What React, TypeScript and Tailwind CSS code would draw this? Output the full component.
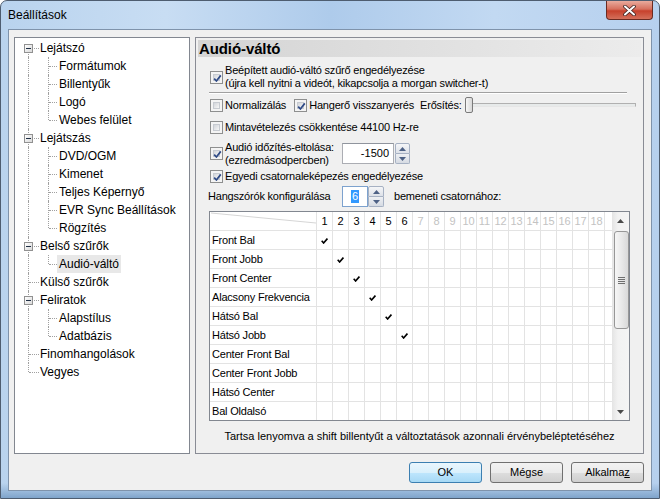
import React from "react";

const UI = "font-['Liberation_Sans',Arial,sans-serif] text-[11px] tracking-[-0.2px] text-black";

function CheckBox({ checked }: { checked?: boolean }) {
  return (
    <span className="relative flex h-[13px] w-[13px] shrink-0 border border-[#8e8f8f] bg-[#f4f4f4] p-[2px]">
      <span className="block h-full w-full border border-[#c7cbd1] bg-gradient-to-br from-[#d2d5da] to-[#f7f7f7]" />
      {checked && (
        <svg className="absolute left-[1px] top-[1px]" width="11" height="11" viewBox="0 0 11 11">
          <path d="M2.2 5.6 L4.4 8 L8.8 2.4" fill="none" stroke="#2e4a86" strokeWidth="1.7" strokeLinejoin="round" />
        </svg>
      )}
    </span>
  );
}

function Arrow({ up, color = "#4d6185" }: { up?: boolean; color?: string }) {
  return (
    <svg width="7" height="4" viewBox="0 0 7 4">
      {up ? <path d="M0 4 L3.5 0 L7 4Z" fill={color} /> : <path d="M0 0 L3.5 4 L7 0Z" fill={color} />}
    </svg>
  );
}

function SpinButtons({ w }: { w: string }) {
  return (
    <div className={`flex ${w} flex-col`}>
      <div className="flex flex-1 items-center justify-center rounded-t-[2px] border border-[#a6b1c3] bg-gradient-to-b from-[#f5f6f8] to-[#dde1e8]">
        <Arrow up />
      </div>
      <div className="flex flex-1 items-center justify-center rounded-b-[2px] border border-t-0 border-[#a6b1c3] bg-gradient-to-b from-[#eef0f3] to-[#d6dbe3]">
        <Arrow />
      </div>
    </div>
  );
}

type TreeRow = { label: string; level: 0 | 1; box?: boolean; first?: boolean; last?: boolean; sel?: boolean };

const tree: TreeRow[] = [
  { label: "Lejátszó", level: 0, box: true, first: true },
  { label: "Formátumok", level: 1 },
  { label: "Billentyűk", level: 1 },
  { label: "Logó", level: 1 },
  { label: "Webes felület", level: 1, last: true },
  { label: "Lejátszás", level: 0, box: true },
  { label: "DVD/OGM", level: 1 },
  { label: "Kimenet", level: 1 },
  { label: "Teljes Képernyő", level: 1 },
  { label: "EVR Sync Beállítások", level: 1 },
  { label: "Rögzítés", level: 1, last: true },
  { label: "Belső szűrők", level: 0, box: true },
  { label: "Audió-váltó", level: 1, last: true, sel: true },
  { label: "Külső szűrők", level: 0 },
  { label: "Feliratok", level: 0, box: true },
  { label: "Alapstílus", level: 1 },
  { label: "Adatbázis", level: 1, last: true },
  { label: "Finomhangolások", level: 0 },
  { label: "Vegyes", level: 0, last: true },
];

const DOT = "border-dotted border-[#a0a0a0]";

function TreeItem({ r }: { r: TreeRow }) {
  return (
    <div className="relative h-[18px]">
      {r.level === 0 ? (
        <div
          className={`absolute left-[13px] border-l ${DOT} ${
            r.first ? "top-[9px] bottom-0" : r.last ? "top-0 h-[9px]" : "top-0 bottom-0"
          }`}
        />
      ) : (
        <div className={`absolute left-[13px] top-0 bottom-0 border-l ${DOT}`} />
      )}
      {r.level === 0 ? (
        <div className={`absolute left-[14px] top-[9px] w-[10px] border-t ${DOT}`} />
      ) : (
        <>
          <div className={`absolute left-[33px] top-0 border-l ${DOT} ${r.last ? "h-[9px]" : "bottom-0"}`} />
          <div className={`absolute left-[34px] top-[9px] w-[8px] border-t ${DOT}`} />
        </>
      )}
      {r.box && (
        <div className="absolute left-[9px] top-[5px] flex h-[9px] w-[9px] items-center justify-center border border-[#919191] bg-gradient-to-br from-white to-[#d9d9d9]">
          <div className="h-px w-[5px] bg-[#1f2f45]" />
        </div>
      )}
      <span
        className={`absolute top-0 h-[18px] px-[2px] leading-[18px] ${r.level === 0 ? "left-[23px]" : "left-[42px]"} ${
          r.sel ? "bg-[#e8e8e8]" : ""
        }`}
      >
        {r.label}
      </span>
    </div>
  );
}

const channels = ["Front Bal", "Front Jobb", "Front Center", "Alacsony Frekvencia", "Hátsó Bal", "Hátsó Jobb", "Center Front Bal", "Center Front Jobb", "Hátsó Center", "Bal Oldalsó"];
const cols = Array.from({ length: 18 }, (_, i) => i + 1);

function Tick() {
  return (
    <svg width="7" height="6" viewBox="0 0 7 6" className="mt-[2px]">
      <path d="M0.7 2.8 L2.6 5 L6.4 0.6" fill="none" stroke="#000" strokeWidth="1.6" />
    </svg>
  );
}

function Grid() {
  return (
    <div className="ml-[13px] mt-[4px] flex h-[210px] w-[421px] overflow-hidden border border-[#828790] bg-white">
      <div className="grid flex-1 auto-rows-[19px] grid-cols-[107px_repeat(18,16px)_7px] content-start overflow-hidden">
        <div className="relative border-b border-r border-[#e3e3e3]">
          <svg className="absolute left-0 top-0" width="106" height="18">
            <line x1="1" y1="1" x2="106" y2="11" stroke="#d6d6d6" strokeWidth="1" />
          </svg>
        </div>
        {cols.map((c) => (
          <div
            key={c}
            className={`flex items-center justify-center border-b border-r border-[#e3e3e3] tracking-normal ${c <= 6 ? "text-black" : "text-[#c3c3c3]"}`}
          >
            {c}
          </div>
        ))}
        <div className="border-b border-[#e3e3e3]" />
        {channels.map((ch, ri) => (
          <React.Fragment key={ch}>
            <div className="flex items-center border-b border-r border-[#e3e3e3] pl-[2px]">{ch}</div>
            {cols.map((c) => (
              <div key={c} className="flex items-center justify-center border-b border-r border-[#e3e3e3]">
                {c === ri + 1 && ri < 6 ? <Tick /> : null}
              </div>
            ))}
            <div className="border-b border-[#e3e3e3]" />
          </React.Fragment>
        ))}
      </div>
      <div className="flex w-[17px] shrink-0 flex-col bg-[linear-gradient(90deg,#e4e4e4,#f2f2f2_35%,#f4f4f4)]">
        <div className="flex h-[17px] items-center justify-center">
          <Arrow up color="#4a4a4a" />
        </div>
        <div className="ml-[2px] mt-[2px] flex h-[98px] flex-col items-center justify-center gap-[1px] rounded-[3px] border border-[#979797] bg-[linear-gradient(90deg,#f6f6f6,#e9e9e9_50%,#d9d9d9)]">
          <div className="h-px w-[7px] bg-[#6f6f6f]" />
          <div className="h-px w-[7px] bg-[#6f6f6f]" />
          <div className="h-px w-[7px] bg-[#6f6f6f]" />
          <div className="h-px w-[7px] bg-[#6f6f6f]" />
        </div>
        <div className="flex-1" />
        <div className="flex h-[17px] items-center justify-center">
          <Arrow color="#4a4a4a" />
        </div>
      </div>
    </div>
  );
}

function Button({ children, def }: { children: React.ReactNode; def?: boolean }) {
  return (
    <div
      className={`flex h-[21px] w-[73px] items-center justify-center rounded-[3px] border ${
        def
          ? "border-[#3c7fb1] bg-[linear-gradient(180deg,#eaf6fd_0%,#d9f0fc_50%,#bee6fd_51%,#a7d9f5_100%)]"
          : "border-[#707070] bg-[linear-gradient(180deg,#f2f2f2_0%,#ebebeb_50%,#dddddd_51%,#cfcfcf_100%)]"
      }`}
    >
      {children}
    </div>
  );
}

export default function App() {
  return (
    <div className="h-[499px] w-[660px] overflow-hidden bg-white">
      <div className="flex h-[499px] w-[660px] flex-col rounded-t-[7px] border border-[#4e5d70] bg-[linear-gradient(180deg,rgba(255,255,255,0)_97%,#7fa4cb_100%),linear-gradient(90deg,#b9d3ee_0%,#c8ddf3_25%,#aecbeb_50%,#c2d9f2_75%,#b6d0ee_100%)]">
        <div className="flex h-[28px] shrink-0 items-start justify-between">
          <span className="ml-[7px] mt-[7px] font-['Liberation_Sans',Arial,sans-serif] text-[12px] leading-[15px] text-black">
            Beállítások
          </span>
          <div className="mr-[6px] flex h-[19px] w-[47px] items-center justify-center rounded-b-[4px] border border-t-0 border-[#6a2b22] bg-[linear-gradient(180deg,#e9ab9d_0%,#d6705e_45%,#c7412c_55%,#d4705b_100%)]">
            <svg width="13" height="11" viewBox="0 0 13 11">
              <path d="M2 1.5 L11 9.5 M11 1.5 L2 9.5" stroke="#3b2320" strokeWidth="3.6" strokeLinecap="round" />
              <path d="M2 1.5 L11 9.5 M11 1.5 L2 9.5" stroke="#ffffff" strokeWidth="2" strokeLinecap="round" />
            </svg>
          </div>
        </div>
        <div className={`mx-[7px] mb-[7px] flex flex-1 flex-col border border-[#7f93ab] bg-[#f0f0f0] pl-[5px] pr-[7px] pt-[7px] ${UI}`}>
          <div className="flex h-[417px] gap-[5px]">
            <div className="w-[176px] shrink-0 border border-[#828790] bg-white pt-px font-['Liberation_Sans',Arial,sans-serif] text-[12px] tracking-normal">
              {tree.map((r) => (
                <TreeItem key={r.label} r={r} />
              ))}
            </div>
            <div className="flex flex-1 flex-col border border-[#898c95] bg-[#f0f0f0]">
              <div className="mx-[2px] mt-[2px] h-[17px] bg-gradient-to-r from-[#d4d4d4] to-[#ececec] pl-[1px] text-[15px] font-bold leading-[17px] tracking-[-0.1px]">
                Audió-váltó
              </div>
              <div className="ml-[14px] mt-[7px] flex h-[26px] items-center gap-[2px]">
                <CheckBox checked />
                <div className="leading-[13px]">
                  <div>Beépített audió-váltó szűrő engedélyezése</div>
                  <div>(újra kell nyitni a videót, kikapcsolja a morgan switcher-t)</div>
                </div>
              </div>
              <div className="ml-[13px] mt-[2px] h-[2px] w-[418px] border-b border-t border-b-white border-t-[#a0a0a0]" />
              <div className="ml-[14px] mt-[3px] flex h-[16px] items-center">
                <CheckBox />
                <span className="ml-[2px] leading-[13px]">Normalizálás</span>
                <span className="ml-[8px]">
                  <CheckBox checked />
                </span>
                <span className="ml-[2px] leading-[13px]">Hangerő visszanyerés</span>
                <span className="ml-[6px] leading-[13px]">Erősítés:</span>
                <div className="relative ml-[3px] flex h-[16px] w-[171px] items-center">
                  <div className="h-[4px] w-full border border-[#b0b0b0] border-b-[#e6e6e6] bg-[#e7eaea]" />
                  <div className="absolute left-0 top-0 h-[16px] w-[8px] rounded-[2px] border border-[#7a7a7a] bg-gradient-to-r from-[#f7f7f7] to-[#d7d7d7]" />
                </div>
              </div>
              <div className="ml-[14px] mt-[6px] flex h-[16px] items-center gap-[2px]">
                <CheckBox />
                <span className="leading-[13px]">Mintavételezés csökkentése 44100 Hz-re</span>
              </div>
              <div className="ml-[14px] mt-[8px] flex h-[21px] items-center">
                <CheckBox checked />
                <div className="ml-[2px] w-[117px] leading-[13px]">
                  <div>Audió időzítés-eltolása:</div>
                  <div>(ezredmásodpercben)</div>
                </div>
                <div className="flex h-[21px] w-[52px] items-center justify-end border border-[#abadb3] border-t-[#8f949d] bg-white pr-[4px] tracking-normal">
                  -1500
                </div>
                <div className="ml-px flex h-[21px]">
                  <SpinButtons w="w-[15px]" />
                </div>
              </div>
              <div className="ml-[14px] mt-[4px] flex h-[16px] items-center gap-[2px]">
                <CheckBox checked />
                <span className="leading-[13px]">Egyedi csatornaleképezés engedélyezése</span>
              </div>
              <div className="ml-[12px] mt-[2px] flex h-[21px] items-center">
                <span className="w-[134px] leading-[13px]">Hangszórók konfigurálása</span>
                <div className="flex h-[21px] w-[26px] items-center border border-[#7da2ce] bg-white pl-[8px]">
                  <span className="bg-[#3399ff] px-px leading-[13px] text-white">6</span>
                </div>
                <div className="flex h-[21px]">
                  <SpinButtons w="w-[16px]" />
                </div>
                <span className="ml-[10px] leading-[13px]">bemeneti csatornához:</span>
              </div>
              <Grid />
              <div className="mt-[9px] text-center leading-[13px] tracking-normal">
                Tartsa lenyomva a shift billentyűt a változtatások azonnali érvénybeléptetéséhez
              </div>
            </div>
          </div>
          <div className="mt-[8px] flex justify-end gap-[8px] tracking-normal">
            <Button def>OK</Button>
            <Button>Mégse</Button>
            <Button>
              <span>
                Alkalma<span className="underline">z</span>
              </span>
            </Button>
          </div>
        </div>
      </div>
    </div>
  );
}
